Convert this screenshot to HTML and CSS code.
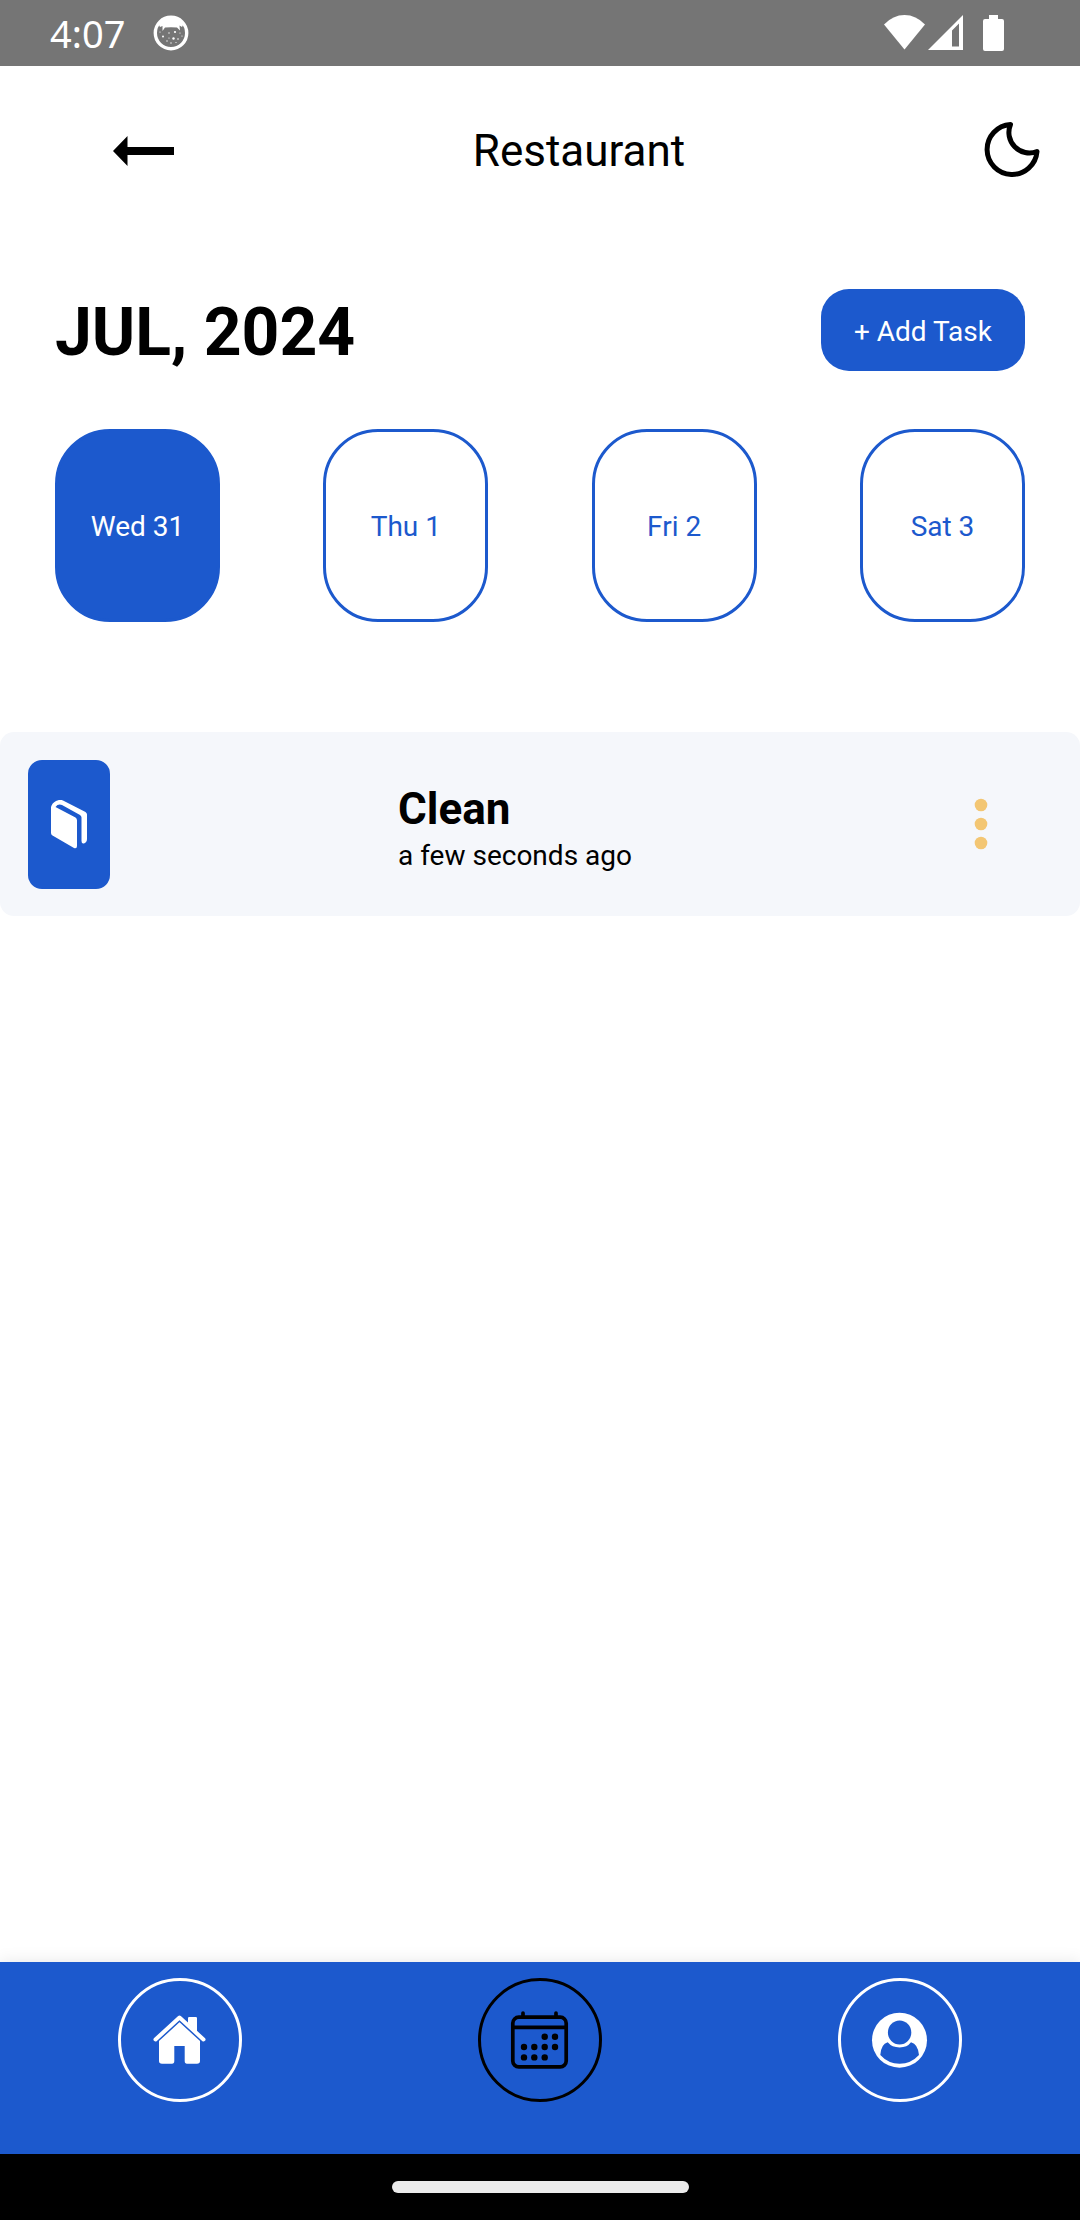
FILE: index.html
```html
<!DOCTYPE html>
<html lang="en">
<head>
<meta charset="utf-8">
<meta name="viewport" content="width=device-width, initial-scale=1">
<title>Restaurant</title>
<link rel="stylesheet" href="styles.css">
</head>
<body class="app">
<div class="status">
  <span class="status-time">4:07</span>
  <svg class="status-app" viewBox="0 0 36 36" width="36" height="36" aria-hidden="true">
    <circle cx="18" cy="18" r="15.7" fill="none" stroke="#fff" stroke-width="3.4"/>
    <path d="M5 8Q10 1 18 1T31 8L29 12 26.500 10.500 27 15.500 24 12.500Q18 12 12 12.500L9.500 16V11L7 12Z" fill="#fff"/>
    <g fill="#fff"><circle cx="10" cy="21.500" r="1"/><circle cx="16" cy="18" r=".7"/><circle cx="22" cy="17" r="1.100"/><circle cx="27" cy="18" r=".6"/><circle cx="20.500" cy="23.500" r="1.200"/><circle cx="14" cy="26" r=".7"/><circle cx="25" cy="24" r=".8"/><circle cx="18" cy="28" r=".7"/><circle cx="7" cy="17" r=".6"/><circle cx="16" cy="23" r=".6"/><circle cx="29" cy="21" r=".6"/><circle cx="23" cy="27.500" r=".6"/></g>
  </svg>
  <div class="status-icons">
    <svg viewBox="0 0 41 36" width="41" height="36" aria-hidden="true"><path d="M0 9.500Q9 0 20.500 0T41 9.500L20.500 34.500Z" fill="#fff"/></svg>
    <svg viewBox="0 0 35 36" width="35" height="36" aria-hidden="true"><path fill-rule="evenodd" d="M0 35 35 0V35ZM24 15.500V31.500H31V8.500Z" fill="#fff"/></svg>
    <svg class="status-battery" viewBox="0 0 21 36" width="21" height="36" aria-hidden="true"><path d="M6 0h9v4h4q2 0 2 2v28q0 2-2 2H2q-2 0-2-2V6q0-2 2-2h4Z" fill="#fff"/></svg>
  </div>
</div>

<header class="topbar">
  <button class="icon-button" type="button" aria-label="Back">
    <svg viewBox="0 0 61 30" width="61" height="30"><path d="M0 15 14.500 0V11H61V19H14.500V30Z"/></svg>
  </button>
  <h1 class="title">Restaurant</h1>
  <button class="icon-button" type="button" aria-label="Dark mode">
    <svg viewBox="0 0 56 60" width="56" height="60"><path d="M26.500 3.500A25 25 0 1 0 53 30.500A20.500 20.500 0 0 1 26.500 3.500Z" fill="none" stroke="#000" stroke-width="5" stroke-linejoin="round"/></svg>
  </button>
</header>

<main class="content">
  <div class="month">
    <h2 class="month-name">JUL, 2024</h2>
    <button class="add" type="button">+ Add Task</button>
  </div>
  <div class="days">
    <button class="day day-active" type="button" aria-pressed="true">Wed 31</button>
    <button class="day" type="button">Thu 1</button>
    <button class="day" type="button">Fri 2</button>
    <button class="day" type="button">Sat 3</button>
  </div>
  <article class="task">
    <div class="task-icon">
      <svg viewBox="0 0 36 50" width="36" height="50" aria-hidden="true">
        <path d="M0 7Q1 3 5 1T12 .5L34.500 12Q36 13 36 14.500V39Q36 42 33 43.500 30.500 44 30.500 41V17.500Q30.500 16 29 15L11 5Q7 3.500 4.500 7L24.500 17.500Q26 18.500 26 20.500V46Q26 49 23 48L1.500 35.500Q0 34.500 0 33Z" fill="#fff"/>
      </svg>
    </div>
    <div class="task-text">
      <h3 class="task-name">Clean</h3>
      <p class="task-time">a few seconds ago</p>
    </div>
    <button class="icon-button task-menu" type="button" aria-label="Task options">
      <svg viewBox="0 0 14 54" width="14" height="54"><g fill="#f3c673"><circle cx="7" cy="7" r="6.300"/><circle cx="7" cy="26" r="6.300"/><circle cx="7" cy="45" r="6.300"/></g></svg>
    </button>
  </article>
</main>

<nav class="tabs" aria-label="Main">
  <a class="tab" href="#home" aria-label="Home">
    <svg viewBox="0 0 60 60" width="60" height="60">
      <path d="M38 15V8.500Q38 7 39.500 7h6Q47 7 47 8.500V23Z" fill="#fff"/>
      <path d="M29.500 10.500 50 30V51Q50 53.700 47 53.700H37Q34.700 53.700 34.700 51V36H24.300V51Q24.300 53.700 22 53.700H12Q9 53.700 9 51V30Z" fill="#fff"/>
      <path d="M5.500 29.500 29.500 7.500 53.500 29.500" fill="none" stroke="#1c59cd" stroke-width="7"/>
      <path d="M5.500 29.500 29.500 7.500 53.500 29.500" fill="none" stroke="#fff" stroke-width="4" stroke-linecap="round" stroke-linejoin="round"/>
      <path d="M38 13V8.500Q38 7 39.500 7h6Q47 7 47 8.500V22Z" fill="#fff"/>
    </svg>
  </a>
  <a class="tab tab-active" href="#calendar" aria-label="Calendar" aria-current="page">
    <svg viewBox="0 0 60 60" width="60" height="60">
      <path d="M2.800 17.300H56.200M13 3V7M46 3V7" fill="none" stroke="#000" stroke-width="3.700" stroke-linecap="round"/>
      <rect x="2.800" y="7.200" width="53.400" height="49.700" rx="6" fill="none" stroke="#000" stroke-width="3.700"/>
      <circle cx="34.700" cy="26.800" r="3.200"/><circle cx="45" cy="26.800" r="3.200"/>
      <circle cx="14" cy="37" r="3.200"/><circle cx="24.300" cy="37" r="3.200"/><circle cx="34.700" cy="37" r="3.200"/><circle cx="45" cy="37" r="3.200"/>
      <circle cx="14" cy="47.400" r="3.200"/><circle cx="24.300" cy="47.400" r="3.200"/><circle cx="34.700" cy="47.400" r="3.200"/>
    </svg>
  </a>
  <a class="tab" href="#profile" aria-label="Profile">
    <svg viewBox="0 0 60 60" width="60" height="60">
      <circle cx="29.500" cy="30.200" r="27.500" fill="#fff"/>
      <ellipse cx="29.600" cy="22.600" rx="11.700" ry="12" fill="#1c59cd"/>
      <path d="M10.300 45Q11 34 17.700 32.200Q22 37.400 29.600 37.400T41 32.200Q48 34 49 45Q41 53.700 29.600 53.700T10.300 45Z" fill="#1c59cd"/>
    </svg>
  </a>
</nav>
<div class="gesture"><div class="gesture-pill"></div></div>
</body>
</html>
```
FILE: styles.css
```css
* {
  box-sizing: border-box;
}

.app {
  display: flex;
  flex-direction: column;
  min-height: 100vh;
  margin: 0;
  background: #fff;
  color: #000;
  font-family: Roboto, "Liberation Sans", sans-serif;
}

button {
  padding: 0;
  border: 0;
  background: none;
  font: inherit;
}

h1, h2, h3, p {
  margin: 0;
}

svg {
  display: block;
}

/* System status bar */
.status {
  display: flex;
  align-items: center;
  height: 66px;
  padding: 0 76px 0 50px;
  background: #757575;
  color: #fff;
}

.status-time {
  font: 38px/66px "Noto Sans", sans-serif;
}

.status-app {
  margin-left: 28px;
}

.status-icons {
  display: flex;
  gap: 3px;
  margin-left: auto;
}

.status-battery {
  margin-left: 17px;
}

/* Screen header */
.topbar {
  display: flex;
  align-items: center;
  justify-content: space-between;
  height: 168px;
  padding: 2px 40px 0 113px;
}

.title {
  font-size: 44px;
  font-weight: 400;
  line-height: 52px;
}

/* Calendar screen */
.content {
  flex: 1;
  padding-top: 55px;
}

.month {
  display: flex;
  align-items: flex-end;
  justify-content: space-between;
  padding: 0 55px;
}

.month-name {
  font-size: 66px;
  line-height: 76px;
}

.add {
  height: 82px;
  padding: 2px 33px 0;
  border-radius: 28px;
  background: #1c59cd;
  color: #fff;
  font-size: 28px;
}

.days {
  display: flex;
  justify-content: space-between;
  padding: 58px 55px 110px;
}

.day {
  width: 165px;
  height: 193px;
  padding-top: 2px;
  border: 3px solid #1c59cd;
  border-radius: 55px;
  color: #1c59cd;
  font-size: 28px;
}

.day-active {
  background: #1c59cd;
  color: #fff;
}

/* Task card */
.task {
  display: flex;
  align-items: center;
  justify-content: space-between;
  padding: 28px 38px 27px 28px;
  border-radius: 14px;
  background: #f5f7fb;
}

.task-icon {
  display: grid;
  place-items: center;
  width: 82px;
  height: 129px;
  border-radius: 14px;
  background: #1c59cd;
}

.task-text {
  padding-top: 10px;
}

.task-name {
  font-size: 44px;
  line-height: 52px;
}

.task-time {
  font-size: 28px;
  line-height: 42px;
}

.task-menu {
  display: grid;
  place-items: center;
  width: 122px;
}

/* Bottom tabs */
.tabs {
  display: grid;
  grid-template-columns: repeat(3, 1fr);
  justify-items: center;
  padding: 16px 0 52px;
  background: #1c59cd;
  box-shadow: 0 0 16px rgba(0, 0, 0, 0.1);
}

.tab {
  display: grid;
  place-items: center;
  width: 124px;
  height: 124px;
  border: 3px solid #fff;
  border-radius: 50%;
}

.tab-active {
  border-color: #000;
}

/* System gesture area */
.gesture {
  position: relative;
  display: grid;
  place-items: center;
  height: 66px;
  background: #000;
}

.gesture-pill {
  width: 297px;
  height: 12px;
  border-radius: 6px;
  background: #ebebeb;
}
```
